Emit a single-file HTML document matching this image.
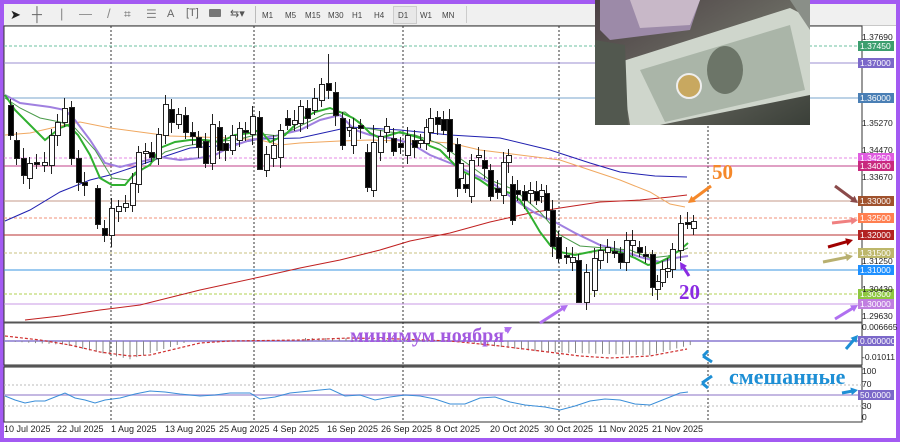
<!DOCTYPE html>
<html><head><meta charset="utf-8">
<style>
*{margin:0;padding:0;box-sizing:border-box}
body{width:900px;height:442px;overflow:hidden;background:#a35af2;font-family:"Liberation Sans",sans-serif;position:relative}
#wrap{position:absolute;left:4px;top:4px;width:892px;height:434px;background:#fff}
#tb{position:absolute;left:0;top:0;width:892px;height:22px;background:#f0f0f0;border-bottom:1px solid #c8c8c8;font-size:8px;color:#444}
#tb span{position:absolute;top:7px}
svg{position:absolute;left:0;top:0}
.lbl{position:absolute;left:858px;width:36px;height:10px;font-size:8.5px;line-height:10px;color:#fff;padding-left:2px;font-family:"Liberation Sans",sans-serif}
.ax{position:absolute;left:862px;font-size:8.5px;color:#222;line-height:10px}
.dt{position:absolute;top:424px;font-size:9px;color:#222}
.ann{position:absolute;font-family:"Liberation Serif",serif;font-weight:bold}
</style></head><body>
<div id="wrap">
<div id="tb">
<span style="left:6px;top:3px;font-size:13px;color:#222">➤</span>
<span style="left:28px;top:2px;font-size:14px;color:#666">┼</span>
<span style="left:56px;top:2px;font-size:13px;color:#888">|</span>
<span style="left:75px;top:2px;font-size:13px;color:#888">—</span>
<span style="left:103px;top:2px;font-size:13px;color:#888">/</span>
<span style="left:120px;top:3px;font-size:12px;color:#666">⌗</span>
<span style="left:142px;top:3px;font-size:12px;color:#888">☰</span>
<span style="left:163px;top:4px;font-size:11px;color:#666">A</span>
<span style="left:182px;top:3px;font-size:11px;color:#666">[T]</span>
<span style="left:205px;top:5px;width:12px;height:8px;background:#777;border-radius:1px"></span>
<span style="left:226px;top:3px;font-size:11px;color:#555">⇆▾</span>
<span style="left:251px;top:2px;width:1px;height:17px;background:#bbb"></span>
<span style="left:258px">M1</span><span style="left:281px">M5</span><span style="left:301px">M15</span><span style="left:324px">M30</span><span style="left:348px">H1</span><span style="left:370px">H4</span>
<span style="left:389px;top:2px;width:24px;height:18px;border:1px solid #ccc;background:#e8e8e8"></span>
<span style="left:394px">D1</span><span style="left:416px">W1</span><span style="left:438px">MN</span>
<span style="left:462px;top:2px;width:1px;height:17px;background:#ccc"></span>
</div>
<div style="position:absolute;left:3px;top:25px;font-size:8px;color:#111">▼ GBPUSD,Daily&nbsp; 1.32307 1.32547 1.32009 1.32454</div>
</div>
<svg id="s" width="900" height="442"></svg>
<div id="labels"></div>
<div class="ann" style="left:712px;top:160px;font-size:21px;color:#f5882a">50</div>
<div class="ann" style="left:679px;top:280px;font-size:21px;color:#8a2be2">20</div>
<div class="ann" style="left:350px;top:325px;font-size:20px;color:#a35ae0">минимум ноября</div>
<div class="ann" style="left:729px;top:364px;font-size:22px;color:#1e8fd5">смешанные</div>
<div class="dt" style="left:4px">10 Jul 2025</div><div class="dt" style="left:57px">22 Jul 2025</div><div class="dt" style="left:111px">1 Aug 2025</div><div class="dt" style="left:165px">13 Aug 2025</div><div class="dt" style="left:219px">25 Aug 2025</div><div class="dt" style="left:273px">4 Sep 2025</div><div class="dt" style="left:327px">16 Sep 2025</div><div class="dt" style="left:381px">26 Sep 2025</div><div class="dt" style="left:436px">8 Oct 2025</div><div class="dt" style="left:490px">20 Oct 2025</div><div class="dt" style="left:544px">30 Oct 2025</div><div class="dt" style="left:598px">11 Nov 2025</div><div class="dt" style="left:652px">21 Nov 2025</div>
<script>
var s='';
function L(x1,y1,x2,y2,c,w,d){s+='<line x1="'+x1+'" y1="'+y1+'" x2="'+x2+'" y2="'+y2+'" stroke="'+c+'" stroke-width="'+(w||1)+'"'+(d?' stroke-dasharray="'+d+'"':'')+'/>';}
function P(pts,c,w,d){s+='<polyline fill="none" points="'+pts.map(function(p){return p.join(',')}).join(' ')+'" stroke="'+c+'" stroke-width="'+(w||1)+'"'+(d?' stroke-dasharray="'+d+'"':'')+'/>';}
s+='<rect x="4" y="26" width="858" height="296" fill="#fff" stroke="#333"/>';
s+='<rect x="4" y="323" width="858" height="42" fill="#fff" stroke="#333"/>';
s+='<rect x="4" y="367" width="858" height="55" fill="#fff" stroke="#333"/>';
L(4,322.5,862,322.5,'#555',2);L(4,366,862,366,'#555',2);
[111,254,403,559,708].forEach(function(x){L(x,26,x,422,'#333',1,'2,2');});
var lv=[[46,'#6cc0a0','3,2','#3c9e6e','1.37450'],[63,'#9b8fd0',0,'#7b68c9','1.37000'],[98,'#7aa6cc',0,'#4a7fb5','1.36000'],[158,'#e48ae4','3,2','#e05ce0','1.34250'],[166,'#c0408a',0,'#c8287e','1.34000'],[201,'#c49a88',0,'#a0522d','1.33000'],[218,'#f0907a','3,2','#ff7f50','1.32500'],[235,'#b83030',0,'#b22222','1.32000'],[253,'#c8c080','3,2','#bdb76b','1.31500'],[270,'#3a95e0',0,'#1e90ff','1.31000'],[294,'#b0d050','3,2','#8dc63f','1.30300'],[304,'#c898e4',0,'#c07ee0','1.30000']];
var lb='';
lv.forEach(function(a){L(4,a[0],862,a[0],a[1],1,a[2]);lb+='<div class="lbl" style="top:'+(a[0]-5)+'px;background:'+a[3]+'">'+a[4]+'</div>';});
[[37,'1.37690'],[123,'1.35270'],[150,'1.34470'],[177,'1.33670'],[261,'1.31250'],[289,'1.30430'],[316,'1.29630'],[327,'0.006665'],[357,'-0.01011'],[371,'100'],[384,'70'],[406,'30'],[417,'0']].forEach(function(a){lb+='<div class="ax" style="top:'+(a[0]-5)+'px">'+a[1]+'</div>';});
lb+='<div class="lbl" style="top:336px;background:#7b68c9">0.000000</div><div class="lbl" style="top:390px;background:#7b68c9">50.0000</div>';
document.getElementById('labels').innerHTML=lb;
P([[25,320],[60,316],[100,310],[140,305],[200,290],[260,277],[300,268],[340,260],[380,250],[410,241],[450,233],[490,222],[530,213],[560,208],[600,202],[640,200],[670,197],[687,195]],'#c02020');
P([[5,221],[30,210],[60,192],[90,180],[110,175],[140,165],[160,158],[190,148],[230,145],[260,139],[300,138],[350,127],[400,130],[450,135],[500,138],[550,150],[590,163],[620,172],[655,176],[687,177]],'#2020b0');
P([[5,135],[30,133],[60,126],[80,122],[110,128],[140,132],[170,136],[200,137],[230,138],[260,140],[280,145],[300,143],[340,141],[370,140],[400,141],[420,141],[450,143],[480,150],[520,155],[560,160],[590,170],[620,180],[650,192],[670,204],[685,207]],'#f0a860');
P([[5,95],[20,103],[50,107],[65,110],[75,120],[90,140],[105,163],[120,167],[140,162],[160,157],[180,160],[200,158],[215,155],[230,147],[250,140],[262,138],[275,136],[300,130],[320,120],[340,115],[355,130],[370,135],[390,138],[410,143],[430,155],[455,165],[475,175],[495,185],[515,200],[535,213],[555,222],[575,233],[600,245],[620,250],[640,257],[660,262],[675,258],[688,256]],'#a080e0',2);
P([[5,98],[20,108],[40,118],[60,122],[75,128],[95,150],[112,178],[128,180],[145,168],[165,152],[185,146],[210,142],[235,140],[260,134],[280,136],[300,126],[325,114],[345,112],[365,128],[390,132],[415,135],[440,144],[465,162],[490,180],[515,190],[540,212],[560,235],[580,246],[605,248],[630,250],[650,258],[668,256],[688,248]],'#4a9a4a',1);
P([[5,95],[15,110],[30,125],[45,140],[60,128],[68,125],[78,135],[90,155],[100,178],[112,185],[125,185],[135,173],[150,165],[160,148],[175,142],[190,140],[205,140],[220,142],[235,135],[250,133],[260,130],[270,142],[285,135],[300,120],[315,112],[330,108],[340,112],[353,118],[360,123],[370,133],[380,138],[390,135],[400,132],[410,135],[420,138],[430,146],[440,150],[450,160],[460,170],[470,175],[480,180],[490,187],[500,190],[510,193],[520,200],[530,215],[540,232],[550,245],[560,252],[575,255],[590,252],[600,250],[610,250],[620,252],[635,258],[648,265],[658,263],[668,258],[680,250],[688,243]],'#30b030',2);
var c=[[10,105,135,0],[16,140,158,0],[23,158,175,0],[29,163,178,1],[36,162,164,0],[44,162,165,1],[51,135,165,1],[57,122,135,1],[64,108,122,1],[71,107,158,0],[78,158,182,0],[84,182,185,0],[97,188,224,0],[104,228,235,0],[111,208,235,1],[118,206,211,1],[125,203,207,1],[132,183,205,1],[138,152,184,1],[145,151,153,1],[151,152,157,0],[158,134,158,1],[165,104,135,1],[171,109,122,0],[178,114,124,1],[185,115,132,0],[192,132,136,0],[198,137,147,0],[205,141,163,0],[212,124,163,1],[219,127,150,0],[225,143,150,0],[232,135,150,1],[239,128,140,1],[245,130,132,0],[252,116,134,1],[259,117,169,0],[266,154,170,1],[273,145,158,1],[280,130,157,1],[287,118,125,0],[294,120,124,1],[300,106,123,1],[307,108,118,0],[314,98,110,1],[321,84,100,1],[328,83,90,0],[335,92,115,0],[342,118,145,0],[349,127,130,1],[353,128,145,1],[360,125,128,0],[367,152,187,0],[373,142,190,1],[380,136,152,1],[386,126,132,1],[393,138,151,0],[400,143,147,0],[407,135,155,1],[414,140,147,0],[420,140,143,1],[426,127,143,1],[430,118,132,1],[437,117,124,0],[443,119,130,0],[449,119,151,0],[457,144,188,0],[460,163,178,1],[465,184,188,0],[471,160,196,1],[478,155,157,1],[484,160,168,0],[490,170,196,0],[497,188,192,0],[503,162,195,1],[508,155,162,1],[512,184,220,0],[517,190,194,0],[524,191,200,0],[530,190,193,1],[536,191,200,0],[541,190,196,1],[546,193,210,0],[552,210,246,0],[558,237,258,0],[566,255,257,0],[572,257,262,1],[578,260,302,0],[586,272,302,1],[594,258,290,1],[600,250,260,1],[607,247,252,1],[614,251,253,0],[620,253,262,0],[626,240,262,1],[632,240,245,1],[639,247,252,0],[645,254,256,0],[652,254,287,0],[657,281,289,1],[662,269,282,1],[667,268,271,1],[672,249,269,1],[680,223,250,1],[687,222,224,0],[693,221,228,1]];
var hi={328:54,373:125,165:95,578:262,586:310,259:117,97:185,652:250,687:212,111:247};
c.forEach(function(k,i){var h=k[1]-6-(i%3)*2,l=k[2]+5+(i%4)*2;if(hi[k[0]]){if(hi[k[0]]<k[1])h=hi[k[0]];else l=hi[k[0]];}
L(k[0]+0.5,h,k[0]+0.5,l,'#222');s+='<rect x="'+(k[0]-2)+'.5" y="'+k[1]+'.5" width="5" height="'+Math.max(1,k[2]-k[1])+'" fill="'+(k[3]?'#fff':'#000')+'" stroke="#222"/>';});
// MACD
L(4,341,862,341,'#8878d0',1.5);
for(var x=8;x<695;x+=6.75){var v;
if(x<60)v=-x*0.06;else if(x<130)v=-3-(x-60)*0.22;else if(x<190)v=-18+(x-130)*0.3;else if(x<300)v=0.5;else if(x<350)v=3;else if(x<450)v=1;else if(x<540)v=-(x-450)*0.12;else if(x<650)v=-11-(x-540)*0.03;else v=-14+(x-650)*0.25;
L(x+0.5,341,x+0.5,341-v,'#888');}
P([[5,336],[40,340],[70,345],[100,352],[130,356],[150,355],[175,349],[200,343],[230,341],[300,340],[350,338],[400,339],[450,341],[500,346],[540,351],[580,356],[610,358],[650,356],[687,349]],'#d03030',1.2,'3,2');
// RSI
L(4,385,862,385,'#bbb',1,'2,2');L(4,406,862,406,'#bbb',1,'2,2');L(4,395,862,395,'#b0a0d8',1.5);
P([[5,396],[15,400],[25,403],[35,401],[45,401],[55,397],[65,393],[75,398],[85,400],[95,403],[105,400],[120,398],[135,394],[150,391],[165,392],[180,394],[200,396],[215,395],[230,393],[250,393],[260,399],[275,397],[290,393],[310,391],[330,389],[345,396],[360,395],[375,400],[390,397],[405,395],[420,396],[435,399],[450,404],[465,404],[480,398],[495,397],[510,402],[525,405],[545,407],[560,410],[575,406],[590,401],[605,399],[620,400],[635,404],[650,405],[665,399],[680,393],[688,392]],'#3a8ed8',1);
// photo
s+='<defs><linearGradient id="g1" x1="0" y1="0" x2="1" y2="1"><stop offset="0" stop-color="#4a3e42"/><stop offset="0.5" stop-color="#6a6a62"/><stop offset="1" stop-color="#3a3f38"/></linearGradient></defs>';
s+='<rect x="595" y="0" width="215" height="125" fill="url(#g1)"/>';
s+='<polygon points="600,0 700,0 690,30 610,40 600,30" fill="#9c8aa8"/><polygon points="630,0 700,0 690,25 640,28" fill="#c8b8c8"/>';
s+='<polygon points="620,62 790,8 810,18 810,95 660,125 630,125" fill="#cfd6cc"/><polygon points="640,70 790,25 805,90 665,122" fill="#aab5a8"/>';
s+='<ellipse cx="725" cy="70" rx="18" ry="24" fill="#6c7568"/><circle cx="689" cy="86" r="12" fill="#c8a860" stroke="#eee" stroke-width="2"/>';
s+='<polygon points="595,40 625,45 628,125 595,125" fill="#52584f"/><polygon points="790,0 810,0 810,30" fill="#8a8f88"/>';
function A(x1,y1,x2,y2,c){var a=Math.atan2(y2-y1,x2-x1),h=8;L(x1,y1,x2-Math.cos(a)*4,y2-Math.sin(a)*4,c,3);s+='<polygon points="'+x2+','+y2+' '+(x2-h*Math.cos(a-0.5))+','+(y2-h*Math.sin(a-0.5))+' '+(x2-h*Math.cos(a+0.5))+','+(y2-h*Math.sin(a+0.5))+'" fill="'+c+'"/>';}
A(540,323,568,305,'#b070f0');A(505,331,512,327,'#b070f0');A(711,186,688,203,'#f5882a');A(689,276,680,262,'#8a2be2');
A(835,186,858,203,'#8a4a4a');A(832,223,858,220,'#f08080');A(828,247,853,240,'#a00000');A(823,262,853,256,'#b8b070');A(835,319,858,305,'#b070f0');
A(846,349,858,335,'#1e8fd5');A(842,393,858,390,'#1e8fd5');
L(712,362,703,356,'#1e8fd5',3);L(703,356,708,351,'#1e8fd5',3);L(712,376,702,383,'#1e8fd5',3);L(702,383,708,388,'#1e8fd5',3);
document.getElementById('s').innerHTML=s;
</script>
</body></html>
